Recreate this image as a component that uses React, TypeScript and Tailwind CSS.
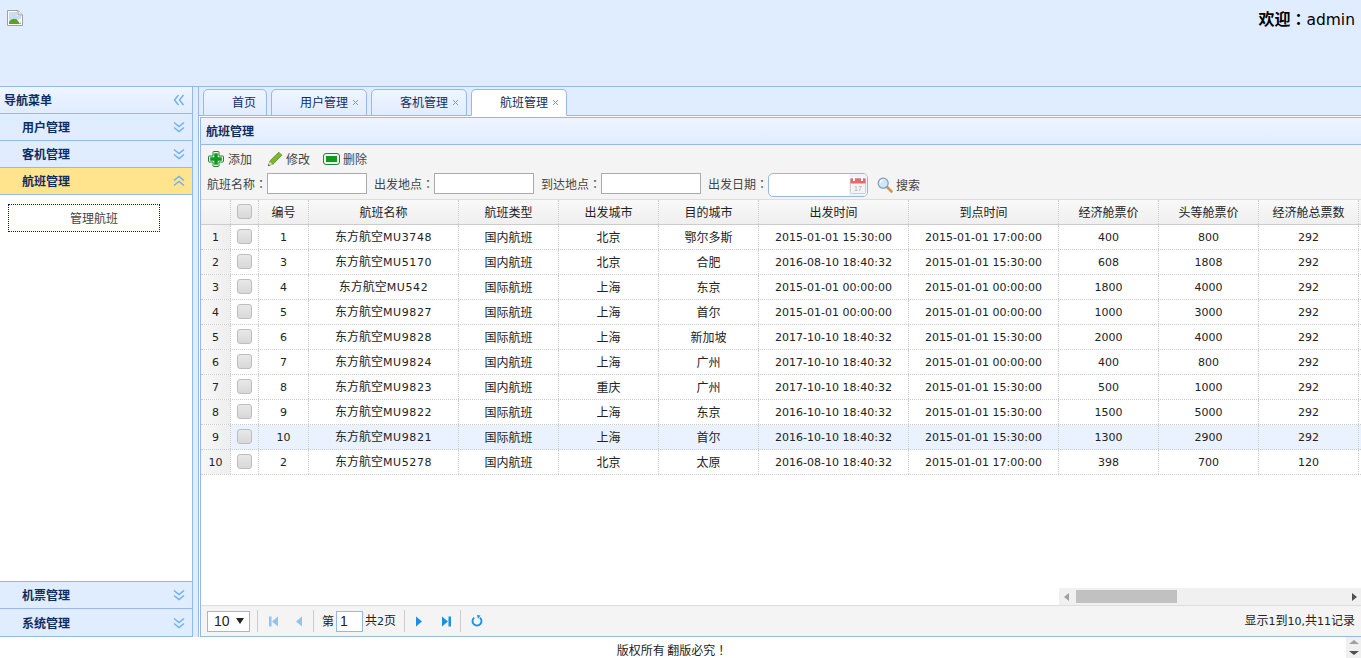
import { X } from 'lucide-react';

const rows = [
  [1, 1, 'MU3748', '国内航班', '北京', '鄂尔多斯', '2015-01-01 15:30:00', '2015-01-01 17:00:00', 400, 800, 292],
  [2, 3, 'MU5170', '国内航班', '北京', '合肥', '2016-08-10 18:40:32', '2015-01-01 15:30:00', 608, 1808, 292],
  [3, 4, 'MU542', '国际航班', '上海', '东京', '2015-01-01 00:00:00', '2015-01-01 00:00:00', 1800, 4000, 292],
  [4, 5, 'MU9827', '国际航班', '上海', '首尔', '2015-01-01 00:00:00', '2015-01-01 00:00:00', 1000, 3000, 292],
  [5, 6, 'MU9828', '国际航班', '上海', '新加坡', '2017-10-10 18:40:32', '2015-01-01 15:30:00', 2000, 4000, 292],
  [6, 7, 'MU9824', '国内航班', '上海', '广州', '2017-10-10 18:40:32', '2015-01-01 00:00:00', 400, 800, 292],
  [7, 8, 'MU9823', '国内航班', '重庆', '广州', '2017-10-10 18:40:32', '2015-01-01 15:30:00', 500, 1000, 292],
  [8, 9, 'MU9822', '国际航班', '上海', '东京', '2016-10-10 18:40:32', '2015-01-01 15:30:00', 1500, 5000, 292],
  [9, 10, 'MU9821', '国际航班', '上海', '首尔', '2016-10-10 18:40:32', '2015-01-01 15:30:00', 1300, 2900, 292],
  [10, 2, 'MU5278', '国内航班', '北京', '太原', '2016-08-10 18:40:32', '2015-01-01 17:00:00', 398, 700, 120],
];

const heads = ['编号', '航班名称', '航班类型', '出发城市', '目的城市', '出发时间', '到点时间', '经济舱票价', '头等舱票价', '经济舱总票数'];
const gridCols = 'grid grid-cols-[30px_28px_50px_150px_100px_100px_100px_150px_150px_100px_100px_100px]';

// latin runs are a size smaller than the CJK ones, like the original's hinted font
function Txt({ children }: { children: string | number }) {
  const parts = String(children).split(/([\u3000-\u9fff\uff00-\uffef]+)/);
  return (
    <span>
      {parts.map((p, i) =>
        i % 2 === 1 ? <span key={i}>{p}</span> : p ? <span key={i} className="text-[11px] font-['DejaVu_Sans',sans-serif]">{p}</span> : null
      )}
    </span>
  );
}

// TC centres full-width punctuation in its cell, SC pushes it to the corner
function Punct({ children }: { children: string }) {
  return <span className="font-['Noto_Sans_CJK_TC',sans-serif]">{children}</span>;
}

function Checkbox() {
  return <span className="block w-[15px] h-[15px] rounded-[3px] border border-[#bdbdbd] bg-gradient-to-b from-[#e8e8e8] to-[#d8d8d8]" />;
}

function Chevrons({ dir }: { dir: 'down' | 'up' | 'left' }) {
  const d = {
    down: 'M1 1.5L6 5.5L11 1.5M1 6.5L6 10.5L11 6.5',
    up: 'M1 5.5L6 1.5L11 5.5M1 10.5L6 6.5L11 10.5',
    left: 'M5.5 1L1.5 6L5.5 11M10.5 1L6.5 6L10.5 11',
  }[dir];
  return (
    <svg width="12" height="12" viewBox="0 0 12 12" className="shrink-0">
      <path d={d} fill="none" stroke="#6cb0ee" strokeWidth="1.4" />
    </svg>
  );
}

function MenuRow({ label, open, tall }: { label: string; open?: boolean; tall?: boolean }) {
  return (
    <div className={`flex items-center justify-between pl-[22px] pr-[7px] border-b border-[#95b8e7] font-bold text-[#0e2d5f] ${tall ? 'h-[28px]' : 'h-[27px]'} ${open ? 'bg-[#ffe48d]' : 'bg-[#e0ecff]'}`}>
      <span>{label}</span>
      <Chevrons dir={open ? 'up' : 'down'} />
    </div>
  );
}

function Tab({ label, width, active, closable }: { label: string; width: string; active?: boolean; closable?: boolean }) {
  return (
    <div className={`flex items-center pl-[28px] pb-[2px] h-[27px] -mb-px border border-[#95b8e7] rounded-t-[5px] text-[#0e2d5f] ${width} ${active ? 'bg-white border-b-white' : 'bg-gradient-to-b from-[#eff5ff] to-[#e0ecff]'}`}>
      <span>{label}</span>
      {closable && <X size={9} strokeWidth={2.5} className="ml-[3px] mt-px text-[#7a94b8]" />}
    </div>
  );
}

function BrokenImage() {
  return (
    <svg width="16" height="16" viewBox="0 0 16 16">
      <path d="M0.5 0.5H11L15.5 5V15.5H0.5Z" fill="#fff" stroke="#a0a0a0" />
      <path d="M11 0.5V5H15.5" fill="#e8e8e8" stroke="#a0a0a0" />
      <path d="M2 2H10V6L14 6V9L2 12Z" fill="#c9dcf5" />
      <path d="M2 14V12C5 8 9 8 11 11L13 14Z" fill="#5aa02c" />
      <path d="M13 14L14 11V14Z" fill="#8cc152" />
    </svg>
  );
}

function AddIcon() {
  return (
    <svg width="16" height="16" viewBox="0 0 16 16">
      <path d="M5 1.2Q5 0.5 5.7 0.5H10.3Q11 0.5 11 1.2V5H14.8Q15.5 5 15.5 5.7V10.3Q15.5 11 14.8 11H11V14.8Q11 15.5 10.3 15.5H5.7Q5 15.5 5 14.8V11H1.2Q0.5 11 0.5 10.3V5.7Q0.5 5 1.2 5H5Z" fill="#e8f5e8" stroke="#2f7d32" />
      <path d="M6.2 2.2H9.8V6.2H13.8V9.8H9.8V13.8H6.2V9.8H2.2V6.2H6.2Z" fill="#129a1c" />
    </svg>
  );
}

function EditIcon() {
  return (
    <svg width="16" height="16" viewBox="0 0 16 16">
      <path d="M2.6 10.2L11.8 1.2L14.8 4.2L5.8 13.4Z" fill="#7cb82f" stroke="#4f8a1c" strokeWidth="0.8" />
      <path d="M1 15L2.6 10.2L5.8 13.4Z" fill="#e8dcb0" stroke="#8a8a60" strokeWidth="0.4" />
      <path d="M1 15L1.6 13L3 14.4Z" fill="#444" />
    </svg>
  );
}

function RemoveIcon() {
  return (
    <svg width="17" height="12" viewBox="0 0 17 12">
      <rect x="0.5" y="0.5" width="16" height="11" rx="2.5" fill="#eef7ee" stroke="#2f7d32" />
      <rect x="3" y="3" width="11" height="6" fill="#129a1c" />
    </svg>
  );
}

function SearchIcon() {
  return (
    <svg width="16" height="16" viewBox="0 0 16 16" className="block">
      <path d="M9.5 9.5L14.5 14.5" stroke="#c89a50" strokeWidth="2.6" strokeLinecap="round" />
      <circle cx="6.2" cy="6.2" r="5" fill="#cfe6fa" stroke="#7f9db9" strokeWidth="1.2" />
      <path d="M3.2 6C3.4 4.3 4.6 3.2 6.2 3" stroke="#fff" strokeWidth="1.2" fill="none" />
    </svg>
  );
}

function CalendarIcon() {
  return (
    <svg width="16" height="17" viewBox="0 0 16 17">
      <rect x="0.5" y="1.5" width="15" height="15" rx="1" fill="#f4f4f4" stroke="#cfcfcf" />
      <rect x="0.5" y="1.5" width="15" height="5" fill="#e8686c" />
      <rect x="3" y="0" width="2" height="4" fill="#fff" />
      <rect x="11" y="0" width="2" height="4" fill="#fff" />
      <text x="4" y="14" fontSize="7" fill="#aaa" fontFamily="Liberation Sans, sans-serif">17</text>
    </svg>
  );
}

function PagerIcon({ dir, bar, off }: { dir: 'left' | 'right'; bar?: boolean; off?: boolean }) {
  const color = off ? '#8ec4f0' : '#1a8fe3';
  return (
    <svg width="10" height="11" viewBox="0 0 10 11" className="block">
      {dir === 'left' ? (
        <>
          {bar && <rect x="0" y="0.5" width="2.5" height="10" fill={color} />}
          <path d="M9 0.5V10.5L3 5.5Z" fill={color} />
        </>
      ) : (
        <>
          <path d="M1 0.5V10.5L7 5.5Z" fill={color} />
          {bar && <rect x="7.5" y="0.5" width="2.5" height="10" fill={color} />}
        </>
      )}
    </svg>
  );
}

function RefreshIcon() {
  return (
    <svg width="12" height="12" viewBox="0 0 12 12" className="block">
      <path d="M3.2 2.6A4.5 4.5 0 1 0 8.8 2.6" fill="none" stroke="#1a8fe3" strokeWidth="1.8" />
      <path d="M6 0L9.5 0.5L7 3.8Z" fill="#1a8fe3" />
    </svg>
  );
}

function Sep({ ml }: { ml: string }) {
  return <span className={`block w-px h-[22px] bg-[#ccc] ${ml}`} />;
}

function FieldLabel({ label }: { label: string }) {
  return <label className="w-[58px] leading-[21px] text-[#444] whitespace-nowrap">{label}<Punct>：</Punct></label>;
}

function Field({ label }: { label: string }) {
  return (
    <>
      <FieldLabel label={label} />
      <input className="w-[100px] h-[21px] border border-[#aaa] bg-white" />
    </>
  );
}

export default function App() {
  return (
    <div className="relative w-[1361px] h-[658px] overflow-hidden flex flex-col bg-white text-[12px] leading-[20px] text-[#222] font-['Noto_Sans_CJK_SC',sans-serif]">
      <header className="h-[87px] shrink-0 flex justify-between items-start bg-[#e0ecff] border-b border-[#95b8e7]">
        <div className="pl-[7px] pt-[10px]"><BrokenImage /></div>
        <div className="pr-[6px] pt-[8px] text-[16px] leading-[20px] text-black">
          <b>欢迎<Punct>：</Punct></b><span className="text-[15.5px] font-['DejaVu_Sans',sans-serif]">admin</span>
        </div>
      </header>

      <div className="flex h-[550px] shrink-0">
        {/* west */}
        <aside className="w-[193px] shrink-0 flex flex-col border-r border-[#95b8e7]">
          <div className="flex items-center justify-between h-[27px] pl-1 pr-[7px] border-b border-[#95b8e7] font-bold text-[#0e2d5f] bg-gradient-to-b from-[#eff5ff] to-[#e0ecff]">
            <span>导航菜单</span>
            <Chevrons dir="left" />
          </div>
          <MenuRow label="用户管理" />
          <MenuRow label="客机管理" />
          <MenuRow label="航班管理" open />
          <div className="flex-1 pl-2 pt-[9px]">
            <div className="flex items-center justify-center w-[152px] h-[28px] pl-5 border border-dotted border-[#0000c8] text-[#444]">管理航班</div>
          </div>
          <div className="border-t border-[#95b8e7]">
            <MenuRow label="机票管理" />
            <MenuRow label="系统管理" tall />
          </div>
        </aside>
        <div className="w-[5px] shrink-0 bg-[#e0ecff]" />

        {/* center */}
        <main className="flex-1 min-w-0 flex flex-col border-l border-[#95b8e7]">
          <div className="flex gap-[4px] h-[29px] shrink-0 pt-[2px] pl-[4px] bg-[#e0ecff] border-b border-[#95b8e7]">
            <Tab label="首页" width="w-[64px]" />
            <Tab label="用户管理" width="w-[96px]" closable />
            <Tab label="客机管理" width="w-[96px]" closable />
            <Tab label="航班管理" width="w-[96px]" active closable />
          </div>

          <div className="flex-1 min-h-0 flex flex-col pl-px pt-px">
            <div className="flex-1 min-h-0 flex flex-col border-l border-t border-b border-[#95b8e7]">
              <div className="h-[27px] shrink-0 flex items-center pl-[5px] border-b border-[#95b8e7] font-bold text-[#0e2d5f] bg-gradient-to-b from-[#eff5ff] to-[#e0ecff]">航班管理</div>

              <div className="h-[54px] shrink-0 bg-[#f4f4f4] pl-[6px] pt-[3px]">
                <div className="flex items-center h-[21px] text-[#444]">
                  <span className="ml-px"><AddIcon /></span>
                  <span className="ml-[4px]">添加</span>
                  <span className="ml-[15px]"><EditIcon /></span>
                  <span className="ml-[3px]">修改</span>
                  <span className="ml-[13px]"><RemoveIcon /></span>
                  <span className="ml-[3px]">删除</span>
                </div>
                <div className="flex items-start gap-[2px] mt-[4px]">
                  <Field label="航班名称" />
                  <span className="w-[3px]" />
                  <Field label="出发地点" />
                  <span className="w-[3px]" />
                  <Field label="到达地点" />
                  <span className="w-[3px]" />
                  <FieldLabel label="出发日期" />
                  <div className="flex justify-end w-[100px] h-[24px] rounded-[5px] border border-[#95b8e7] bg-white overflow-hidden">
                    <div className="w-[18px] flex items-center justify-center bg-[#f0f4fa]"><CalendarIcon /></div>
                  </div>
                  <span className="ml-[7px] mt-[4px]"><SearchIcon /></span>
                  <span className="ml-px mt-[2px] text-[#444]">搜索</span>
                </div>
              </div>

              <div className="flex-1 min-h-0 flex flex-col bg-white">
                <div className={`${gridCols} h-[26px] shrink-0 border-t border-t-[#ddd] border-b border-b-[#ccc] bg-gradient-to-b from-[#f9f9f9] to-[#efefef] text-center`}>
                  <div className="border-r border-dotted border-[#ccc]" />
                  <div className="flex justify-center pt-[4px] border-r border-dotted border-[#ccc]"><Checkbox /></div>
                  {heads.map((h) => (
                    <div key={h} className="flex items-center justify-center border-r border-dotted border-[#ccc] whitespace-nowrap">{h}</div>
                  ))}
                </div>
                {rows.map((r, i) => (
                  <div key={i} className={`${gridCols} h-[25px] shrink-0 border-b border-dotted border-[#ccc] text-center ${i === 8 ? 'bg-[#eaf2ff]' : ''}`}>
                    <div className="flex items-center justify-center border-r border-dotted border-[#ccc] bg-gradient-to-r from-[#f8f8f8] to-[#eee]"><Txt>{r[0]}</Txt></div>
                    <div className="flex justify-center pt-[4px] border-r border-dotted border-[#ccc]"><Checkbox /></div>
                    <div className="flex items-center justify-center border-r border-dotted border-[#ccc]"><Txt>{r[1]}</Txt></div>
                    <div className="flex items-center justify-center border-r border-dotted border-[#ccc]">
                      <span>
                        东方航空
                        <span className="text-[11px] tracking-[0.6px] font-['DejaVu_Sans',sans-serif]">{r[2]}</span>
                      </span>
                    </div>
                    {r.slice(3).map((v, j) => (
                      <div key={j} className="flex items-center justify-center border-r border-dotted border-[#ccc]"><Txt>{v}</Txt></div>
                    ))}
                  </div>
                ))}
                <div className="flex-1" />
                <div className="self-end shrink-0 w-[302px] h-[17px] flex items-center bg-[#f0f0f0]">
                  <span className="ml-[5px] w-0 h-0 border-y-[4px] border-y-transparent border-r-[5px] border-r-[#a0a0a0]" />
                  <span className="ml-[7px] w-[101px] h-[13px] bg-[#c1c1c1]" />
                  <span className="ml-auto mr-[4px] w-0 h-0 border-y-[4px] border-y-transparent border-l-[5px] border-l-[#505050]" />
                </div>
              </div>

              <div className="h-[31px] shrink-0 flex items-center justify-between pl-[6px] pr-[6px] bg-[#f4f4f4] border-t border-[#ddd]">
                <div className="flex items-center">
                  <div className="flex items-center justify-between w-[43px] h-[21px] pl-[6px] pr-[5px] border border-[#95b8e7] bg-white text-[14px] font-['Liberation_Sans',sans-serif]">
                    <span>10</span>
                    <span className="w-0 h-0 border-x-[4px] border-x-transparent border-t-[6px] border-t-[#222]" />
                  </div>
                  <Sep ml="ml-[7px]" />
                  <span className="ml-[11px]"><PagerIcon dir="left" bar off /></span>
                  <span className="ml-[14px]"><PagerIcon dir="left" off /></span>
                  <Sep ml="ml-[10px]" />
                  <span className="ml-[8px]">第</span>
                  <span className="ml-[2px] flex items-center w-[27px] h-[21px] pl-[3px] border border-[#95b8e7] bg-white text-[14px] font-['Liberation_Sans',sans-serif]">1</span>
                  <span className="ml-[2px]"><Txt>共2页</Txt></span>
                  <Sep ml="ml-[8px]" />
                  <span className="ml-[10px]"><PagerIcon dir="right" /></span>
                  <span className="ml-[16px]"><PagerIcon dir="right" bar /></span>
                  <Sep ml="ml-[9px]" />
                  <span className="ml-[10px]"><RefreshIcon /></span>
                </div>
                <div className="whitespace-nowrap"><Txt>显示1到10,共11记录</Txt></div>
              </div>
            </div>
          </div>
        </main>
      </div>

      <footer className="flex-1 flex justify-center pt-[3px] pr-[17px]"><span>版权所有 翻版必究<Punct>！</Punct></span></footer>

      {/* page scrollbar peeking in at the bottom right */}
      <div className="absolute right-0 bottom-0 w-[15px] h-[21px] flex flex-col items-center justify-around bg-[#f0f0f0]">
        <span className="w-0 h-0 border-x-[5px] border-x-transparent border-b-[4px] border-b-[#a0a0a0]" />
        <span className="w-0 h-0 border-x-[5px] border-x-transparent border-t-[4px] border-t-[#505050]" />
      </div>
    </div>
  );
}
